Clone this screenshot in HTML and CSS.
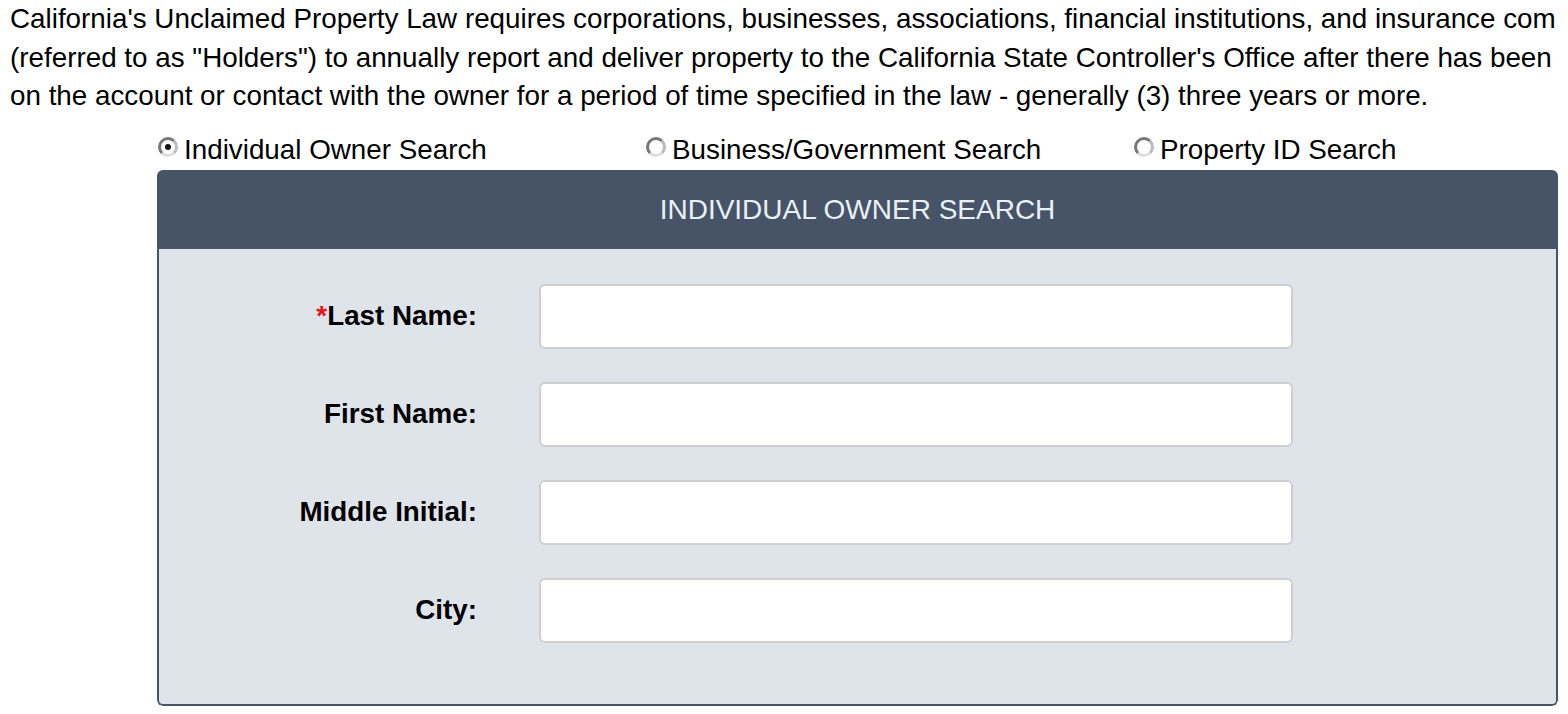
FILE: index.html
```html
<!DOCTYPE html>
<html lang="en">
<head>
    <meta charset="UTF-8">
    <meta name="viewport" content="width=device-width, initial-scale=1.0">
    <title>Unclaimed Property Search</title>
    <link rel="stylesheet" href="styles.css">
</head>
<body>

    <!-- Intro text -->
    <p class="intro">
        <span>California's Unclaimed Property Law requires corporations, businesses, associations, financial institutions, and insurance com</span>
        <span>(referred to as "Holders") to annually report and deliver property to the California State Controller's Office after there has been</span>
        <span>on the account or contact with the owner for a period of time specified in the law - generally (3) three years or more.</span>
    </p>

    <!-- Search type -->
    <div class="search-types">
        <label class="search-type"><span class="radio checked"></span>Individual Owner Search</label>
        <label class="search-type"><span class="radio"></span>Business/Government Search</label>
        <label class="search-type"><span class="radio"></span>Property ID Search</label>
    </div>

    <!-- Search panel -->
    <div class="panel">
        <div class="panel-header">INDIVIDUAL OWNER SEARCH</div>
        <div class="panel-body">
            <div class="form-row">
                <label class="form-label"><span class="required">*</span>Last Name:</label>
                <input class="form-input" type="text">
            </div>
            <div class="form-row">
                <label class="form-label">First Name:</label>
                <input class="form-input" type="text">
            </div>
            <div class="form-row">
                <label class="form-label">Middle Initial:</label>
                <input class="form-input" type="text">
            </div>
            <div class="form-row">
                <label class="form-label">City:</label>
                <input class="form-input" type="text">
            </div>
        </div>
    </div>

</body>
</html>
```

FILE: styles.css
```css
body {
    font-family: 'Liberation Sans', Arial, sans-serif;
    margin: 0;
    padding: 0;
    background-color: #fff;
    color: #000;
    overflow: hidden;
}

/* Intro paragraph */
.intro {
    margin: 0;
    padding-left: 10px;
    font-size: 27.8px;
    line-height: 38.5px;
    white-space: nowrap;
}

.intro span {
    display: block;
}

/* Search type radios */
.search-types {
    display: grid;
    grid-template-columns: 488px 488px 488px;
    margin-top: 15px;
    padding-left: 158px;
    height: 39px;
    align-items: center;
}

.search-type {
    display: flex;
    align-items: center;
    font-size: 27.8px;
}

.radio {
    width: 14px;
    height: 14px;
    border: 3px solid #777;
    border-right-color: #bbb;
    border-bottom-color: #ddd;
    border-radius: 50%;
    margin-right: 6px;
    margin-top: -6px;
    position: relative;
    box-sizing: content-box;
}

.radio.checked::after {
    content: "";
    position: absolute;
    top: 4px;
    left: 4px;
    width: 6px;
    height: 6px;
    border-radius: 50%;
    background-color: #111;
}

/* Panel */
.panel {
    margin-left: 157px;
    width: 1401px;
    border-radius: 6px;
    overflow: hidden;
    box-sizing: border-box;
}

.panel-header {
    background-color: #475467;
    color: #e8f1f8;
    font-size: 28px;
    text-align: center;
    height: 79px;
    line-height: 80px;
}

.panel-body {
    background-color: #dfe3ea;
    border: 2px solid #475467;
    border-top: none;
    border-radius: 0 0 6px 6px;
    padding: 35px 0 61px 0;
    display: flex;
    flex-direction: column;
    gap: 33px;
}

.form-row {
    display: flex;
    align-items: center;
}

.form-label {
    width: 318px;
    text-align: right;
    font-size: 27.8px;
    font-weight: bold;
    margin-right: 62px;
}

.required {
    color: #e8141c;
}

.form-input {
    width: 754px;
    height: 65px;
    box-sizing: border-box;
    border: 2px solid #cfcfcf;
    border-radius: 6px;
    background-color: #fff;
    font-size: 24px;
    padding: 0 12px;
    margin: 0;
}
```
